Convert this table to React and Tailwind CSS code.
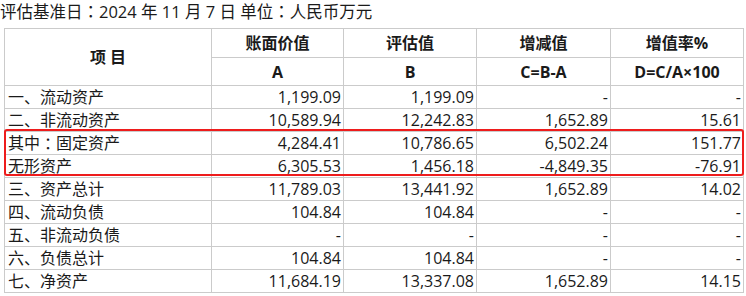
import React from "react";

const rows = [
  ["一、流动资产", "1,199.09", "1,199.09", "-", "-"],
  ["二、非流动资产", "10,589.94", "12,242.83", "1,652.89", "15.61"],
  ["其中：固定资产", "4,284.41", "10,786.65", "6,502.24", "151.77"],
  ["无形资产", "6,305.53", "1,456.18", "-4,849.35", "-76.91"],
  ["三、资产总计", "11,789.03", "13,441.92", "1,652.89", "14.02"],
  ["四、流动负债", "104.84", "104.84", "-", "-"],
  ["五、非流动负债", "-", "-", "-", "-"],
  ["六、负债总计", "104.84", "104.84", "-", "-"],
  ["七、净资产", "11,684.19", "13,337.08", "1,652.89", "14.15"],
];

const font = { fontFamily: '"Open Sans", "Noto Sans CJK SC", sans-serif' };
const tc = { fontFamily: '"Noto Sans CJK TC", sans-serif' };

function withColon(s) {
  const parts = s.split("：");
  if (parts.length === 1) return s;
  return parts.map((p, i) => (
    <React.Fragment key={i}>
      {i > 0 && <span style={tc}>：</span>}
      {p}
    </React.Fragment>
  ));
}

export default function App() {
  return (
    <div className="w-[746px] h-[296px] bg-white overflow-hidden text-[#1a1a1a]" style={font}>
      <div className="h-[28px] text-[16.5px] leading-[22px] whitespace-nowrap">
        {withColon("评估基准日：2024 年 11 月 7 日 单位：人民币万元")}
      </div>
      <div className="relative ml-[4px] w-[740px]">
        <div className="grid grid-cols-[206px_131px_132px_133px_132px] grid-rows-[28px_27px_repeat(9,22px)] gap-px p-px bg-[#cbcbcb] text-[16px] leading-[20px]">
          <div className="row-span-2 bg-white flex items-center justify-center font-bold">项 目</div>
          <div className="bg-white flex items-center justify-center font-bold">账面价值</div>
          <div className="bg-white flex items-center justify-center font-bold">评估值</div>
          <div className="bg-white flex items-center justify-center font-bold">增减值</div>
          <div className="bg-white flex items-center justify-center font-bold">增值率%</div>
          <div className="bg-white flex items-center justify-center font-bold">A</div>
          <div className="bg-white flex items-center justify-center font-bold">B</div>
          <div className="bg-white flex items-center justify-center font-bold">C=B-A</div>
          <div className="bg-white flex items-center justify-center font-bold">D=C/A×100</div>
          {rows.map((r, i) => (
            <React.Fragment key={i}>
              <div className="bg-white flex items-center pl-[3px] whitespace-nowrap">{withColon(r[0])}</div>
              {r.slice(1).map((v, j) => (
                <div key={j} className="bg-white flex items-center justify-end pr-[2px] whitespace-nowrap">{v}</div>
              ))}
            </React.Fragment>
          ))}
        </div>
        <div className="absolute left-0 top-[101px] w-[740px] h-[47px] border-2 border-[#ee1c1c] rounded-[3px] pointer-events-none" />
      </div>
    </div>
  );
}
